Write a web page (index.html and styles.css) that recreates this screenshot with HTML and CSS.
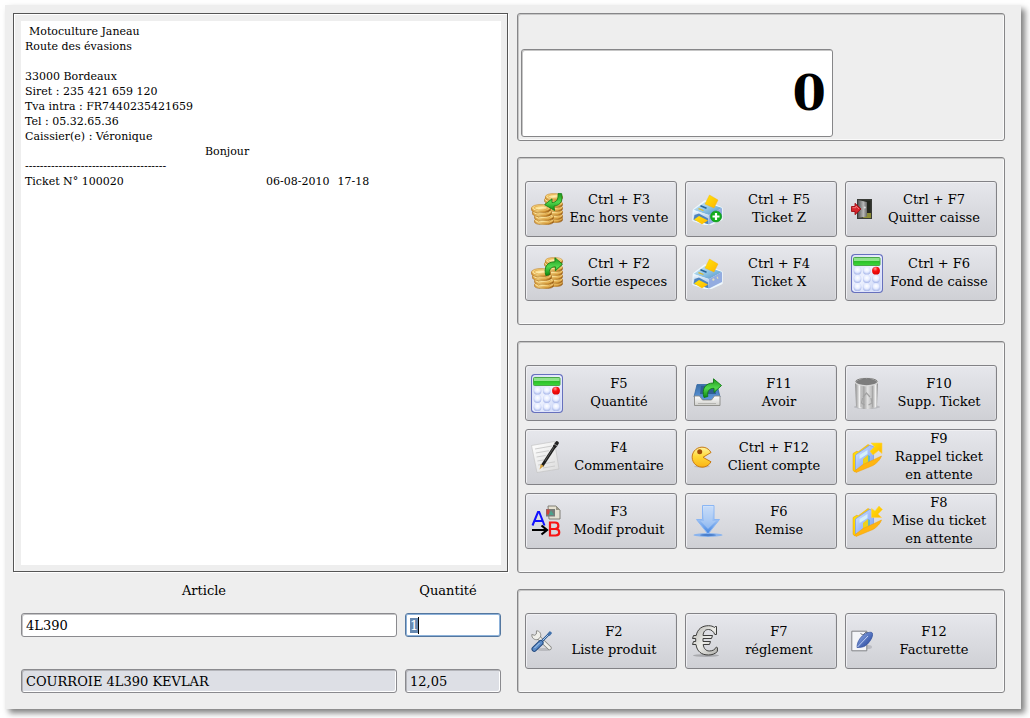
FILE: index.html
```html
<!DOCTYPE html>
<html lang="fr">
<head>
<meta charset="utf-8">
<title>Caisse</title>
<link rel="stylesheet" href="styles.css">
</head>
<body>
<svg class="sprite" aria-hidden="true">
  <defs>
    <linearGradient id="gold" x1="0" x2="1" y1="0" y2="0">
      <stop offset="0" stop-color="#e09a2c"/><stop offset=".35" stop-color="#ffeb98"/><stop offset=".65" stop-color="#dca038"/><stop offset="1" stop-color="#8a5010"/>
    </linearGradient>
    <linearGradient id="goldTop" x1="0" x2="1" y1="0" y2="1">
      <stop offset="0" stop-color="#f0bc50"/><stop offset=".5" stop-color="#ffeeae"/><stop offset="1" stop-color="#dc9a2c"/>
    </linearGradient>
    <linearGradient id="green" x1="0" x2="0" y1="0" y2="1">
      <stop offset="0" stop-color="#1f9a1c"/><stop offset=".5" stop-color="#52d84e"/><stop offset="1" stop-color="#0e8a10"/>
    </linearGradient>
    <linearGradient id="printerTop" x1="0" x2="1" y1="0" y2="1">
      <stop offset="0" stop-color="#d8eefa"/><stop offset=".5" stop-color="#8fc4e4"/><stop offset="1" stop-color="#4f8fc4"/>
    </linearGradient>
    <linearGradient id="printerFront" x1="0" x2="0" y1="0" y2="1">
      <stop offset="0" stop-color="#f6fbff"/><stop offset="1" stop-color="#7caada"/>
    </linearGradient>
    <linearGradient id="yellow" x1="0" x2="1" y1="0" y2="1">
      <stop offset="0" stop-color="#ffe60a"/><stop offset="1" stop-color="#ffb400"/>
    </linearGradient>
    <linearGradient id="door" x1="0" x2="1" y1="0" y2="0">
      <stop offset="0" stop-color="#555"/><stop offset=".6" stop-color="#b8b8b8"/><stop offset="1" stop-color="#666"/>
    </linearGradient>
    <linearGradient id="calcBody" x1="0" x2="1" y1="0" y2="1">
      <stop offset="0" stop-color="#cdd6f4"/><stop offset=".5" stop-color="#eef2ff"/><stop offset="1" stop-color="#c0cdf4"/>
    </linearGradient>
    <linearGradient id="calcScreen" x1="0" x2="0" y1="0" y2="1">
      <stop offset="0" stop-color="#8fe08c"/><stop offset=".45" stop-color="#8ee68a"/><stop offset=".5" stop-color="#2cc02a"/><stop offset="1" stop-color="#3ed83a"/>
    </linearGradient>
    <radialGradient id="ball" cx=".5" cy=".35" r=".7">
      <stop offset="0" stop-color="#ffffff"/><stop offset=".5" stop-color="#e6ecff"/><stop offset="1" stop-color="#9aabe4"/>
    </radialGradient>
    <radialGradient id="redBall" cx=".4" cy=".25" r=".8">
      <stop offset="0" stop-color="#ff9a9a"/><stop offset=".4" stop-color="#fa1010"/><stop offset="1" stop-color="#d80000"/>
    </radialGradient>
    <linearGradient id="paper" x1="0" x2="1" y1="0" y2="1">
      <stop offset="0" stop-color="#ffffff"/><stop offset="1" stop-color="#dcdcdc"/>
    </linearGradient>
    <linearGradient id="blueTray" x1="0" x2="0" y1="0" y2="1">
      <stop offset="0" stop-color="#3a6ea6"/><stop offset="1" stop-color="#5f9ae0"/>
    </linearGradient>
    <linearGradient id="whiteTray" x1="0" x2="0" y1="0" y2="1">
      <stop offset="0" stop-color="#ffffff"/><stop offset="1" stop-color="#cfcfcb"/>
    </linearGradient>
    <linearGradient id="pac" x1="0" x2="0" y1="0" y2="1">
      <stop offset="0" stop-color="#fff3a0"/><stop offset=".45" stop-color="#ffd93a"/><stop offset="1" stop-color="#fbb414"/>
    </linearGradient>
    <linearGradient id="downBlue" x1="0" x2="0" y1="0" y2="1">
      <stop offset="0" stop-color="#d4e4fa"/><stop offset=".5" stop-color="#9cc0f2"/><stop offset="1" stop-color="#3f84e4"/>
    </linearGradient>
    <linearGradient id="steel" x1="0" x2="1" y1="0" y2="0">
      <stop offset="0" stop-color="#858585"/><stop offset=".2" stop-color="#f2f2f2"/><stop offset=".38" stop-color="#a4a4a4"/><stop offset=".55" stop-color="#e2e2e2"/><stop offset=".78" stop-color="#b0b0b0"/><stop offset=".9" stop-color="#f4f4f4"/><stop offset="1" stop-color="#777"/>
    </linearGradient>
    <linearGradient id="folderPaper" x1="0" x2="1" y1="0" y2="1">
      <stop offset="0" stop-color="#dcecff"/><stop offset=".5" stop-color="#a4bffa"/><stop offset="1" stop-color="#7ca0ee"/>
    </linearGradient>
    <linearGradient id="silver" x1="0" x2="1" y1="0" y2="1">
      <stop offset="0" stop-color="#b0b0ac"/><stop offset=".5" stop-color="#ecece8"/><stop offset="1" stop-color="#b0b0ac"/>
    </linearGradient>
    <linearGradient id="pen" x1="0" x2="1" y1="0" y2="1">
      <stop offset="0" stop-color="#a8c0f0"/><stop offset=".5" stop-color="#5574c0"/><stop offset="1" stop-color="#1f3c90"/>
    </linearGradient>
  </defs>

  <symbol id="coin" viewBox="0 0 18 8" preserveAspectRatio="none">
    <path d="M.5 3.500v1.600C.5 6.700 4.300 7.800 9 7.800s8.500-1.100 8.500-2.700V3.500z" fill="url(#gold)" stroke="#9a5e16" stroke-width=".5"/>
    <ellipse cx="9" cy="3.500" rx="8.500" ry="3.100" fill="url(#goldTop)" stroke="#c0822a" stroke-width=".5"/>
    <ellipse cx="9" cy="3.500" rx="6" ry="1.900" fill="none" stroke="#d89c38" stroke-width=".6"/>
  </symbol>

  <symbol id="coins" viewBox="0 0 32 32">
    <use href="#coin" x="14" y="22" width="18" height="8"/>
    <use href="#coin" x="14" y="19" width="18" height="8"/>
    <use href="#coin" x="14" y="15" width="18" height="8"/>
    <use href="#coin" x="14" y="11" width="18" height="8"/>
    <use href="#coin" x="14" y="7" width="18" height="8"/>
    <use href="#coin" x="13" y="3" width="18" height="8"/>
    <use href="#coin" x="14" y="0" width="18" height="8"/>
    <use href="#coin" x="3" y="24" width="20" height="8"/>
    <use href="#coin" x="3" y="20" width="20" height="8"/>
    <use href="#coin" x="1" y="15" width="20" height="9"/>
    <use href="#coin" x="0" y="11" width="20" height="9"/>
  </symbol>

  <symbol id="printer" viewBox="0 0 32 32">
    <path d="M3 17 14 8.500l16.500 7V26l-13 6L2.500 27z" fill="#eaf4fa" stroke="#eef8fd" stroke-width="2.500" stroke-linejoin="round"/>
    <path d="M2.500 17 14 9l17 6-13 7z" fill="url(#printerTop)"/>
    <path d="M2.500 17 18 22v9.500L2.500 26z" fill="url(#printerFront)"/>
    <path d="M18 22 31 15v10l-13 6.500z" fill="#93ace0"/>
    <path d="M3.500 22 8 20.500l9 5V31L2.500 27z" fill="#4f83bd"/>
    <path d="m3 26.500 5-3.500 9 4.500-6 3.800z" fill="url(#yellow)"/>
    <path d="m9.500 12.800 6 2.400" stroke="#27649a" stroke-width="1.600"/>
    <path d="m7.500 15.600 5 1.900" stroke="#e0ba28" stroke-width="1.200"/>
    <path d="m18.500 2 8.500 5-4 8-9-4z" fill="url(#yellow)" stroke="#f7b100" stroke-width=".4"/>
    <path d="m21.500 23 1.800-.8M26 21l1-.5" stroke="#e6e0b4" stroke-width="2"/>
  </symbol>

  <symbol id="calculator" viewBox="0 0 32 39">
    <rect x=".6" y=".6" width="30.800" height="37.800" rx="3.200" fill="url(#calcBody)" stroke="#6670bd" stroke-width="1.200"/>
    <rect x="1.700" y="1.700" width="28.600" height="35.600" rx="2.400" fill="none" stroke="#e9edff"/>
    <rect x="2.500" y="3.500" width="26.500" height="8" rx="1" fill="url(#calcScreen)" stroke="#4aa848"/>
    <g fill="url(#ball)">
      <circle cx="6.500" cy="16.700" r="3.900"/><circle cx="15.800" cy="16.700" r="3.900"/>
      <circle cx="6.500" cy="25" r="3.900"/><circle cx="15.800" cy="25" r="3.900"/><circle cx="25" cy="25" r="3.900"/>
      <circle cx="6.500" cy="33.200" r="3.900"/><circle cx="15.800" cy="33.200" r="3.900"/><circle cx="25" cy="33.200" r="3.900"/>
    </g>
    <circle cx="25" cy="16.700" r="3.900" fill="url(#redBall)"/>
  </symbol>

  <symbol id="turn-right" viewBox="0 0 20 20">
    <path d="M2 19.500C-.5 11 3 5 11.500 5V.8l8 6.700-7.500 7v-4.200C7 10.300 5 13.500 5.800 18.500z" fill="url(#green)" stroke="#117a14" stroke-width=".9" stroke-linejoin="round"/>
  </symbol>

  <symbol id="folder" viewBox="0 0 32 32">
    <path d="m2 12.500 4-2.500 1 1 10-7.500 2 1V19L4 31l-2-1.500z" fill="url(#yellow)" stroke="#e8a000" stroke-width=".5"/>
    <path d="m4.500 14 14-9.500 4 1V20L7 29H4.500z" fill="url(#folderPaper)" stroke="#7c9eee" stroke-width=".8"/>
    <path d="m8.500 14 8-5v4l-8 5z" fill="#d4f0fb"/>
    <path d="m12 18 5-4v7l-5 4z" fill="#ecd21c"/>
    <path d="m17 14 2 1v6l-2 1z" fill="#66b8c8"/>
    <path d="M3.500 30 12 23.500l10-4.500 8.500-4c-1 3.500-5 7.500-8.500 9.500L5 31.500z" fill="#ffb512" stroke="#f2a000" stroke-width=".5"/>
  </symbol>
</svg>

<main class="window">
  <section class="side">
    <div class="ticket-frame">
      <div class="ticket">
        <p class="line indent">Motoculture Janeau</p>
        <p class="line">Route des évasions</p>
        <p class="line"></p>
        <p class="line">33000 Bordeaux</p>
        <p class="line">Siret : 235 421 659 120</p>
        <p class="line">Tva intra : FR7440235421659</p>
        <p class="line">Tel : 05.32.65.36</p>
        <p class="line">Caissier(e) : Véronique</p>
        <p class="line greeting">Bonjour</p>
        <p class="line">--------------------------------------</p>
        <p class="line entry"><span class="entry-number">Ticket N° 100020</span><span>06-08-2010</span><span>17-18</span></p>
      </div>
    </div>
    <form class="entry-form">
      <label class="caption" for="article">Article</label>
      <label class="caption" for="quantity">Quantité</label>
      <input class="field" id="article" type="text" value="4L390">
      <input class="field field-active" id="quantity" type="text" value="1">
      <input class="field field-readonly" type="text" value="COURROIE 4L390 KEVLAR" aria-label="Désignation" readonly>
      <input class="field field-readonly" type="text" value="12,05" aria-label="Prix" readonly>
    </form>
  </section>

  <section class="controls">
    <div class="panel panel-display">
      <input class="display" type="text" value="0" aria-label="Total" readonly>
    </div>

    <div class="panel">
      <button class="key" type="button">
        <svg class="icon" viewBox="0 0 32 32"><use href="#coins"/><path d="M27 .6h3.600C32 7 30.500 12 23 13.200l.6 4.300-10-5.800L21 5.800v3.800c4.500-.3 6.500-3 6-9z" fill="url(#green)" stroke="#117a14" stroke-width=".8" stroke-linejoin="round"/></svg>
        <span class="key-text">Ctrl + F3<br>Enc hors vente</span>
      </button>
      <button class="key" type="button">
        <svg class="icon" viewBox="0 0 32 32"><use href="#printer"/><circle cx="25" cy="23.500" r="5.600" fill="#12ae1c" stroke="#0a8a14" stroke-width=".5"/><path d="M25 20v7M21.500 23.500h7" stroke="#fff" stroke-width="2.200"/></svg>
        <span class="key-text">Ctrl + F5<br>Ticket Z</span>
      </button>
      <button class="key" type="button">
        <svg class="icon icon-small" viewBox="0 0 22 22"><path d="M6 1h15v20H6z" fill="#3a3c38"/><path d="M8 2.500h11.500v17H8z" fill="#24261f"/><path d="M14 15h6v5h-8z" fill="#8c8c36"/><path d="M7 2l9 2v14.500L7 20z" fill="url(#door)"/><circle cx="13.800" cy="9.500" r="1" fill="#ddd"/><path d="M.5 8.500H4V5.300l6 5.700-6 5.700v-3.200H.5z" fill="#d8252c" stroke="#9c0c12" stroke-width=".9"/><path d="M1.500 9.700H5V8l3 3" fill="none" stroke="#f58a8a" stroke-width=".8"/></svg>
        <span class="key-text">Ctrl + F7<br>Quitter caisse</span>
      </button>
      <button class="key" type="button">
        <svg class="icon" viewBox="0 0 32 32"><use href="#coins"/><use href="#turn-right" x="13" y="0" width="19" height="19"/></svg>
        <span class="key-text">Ctrl + F2<br>Sortie especes</span>
      </button>
      <button class="key" type="button">
        <svg class="icon" viewBox="0 0 32 32"><use href="#printer"/></svg>
        <span class="key-text">Ctrl + F4<br>Ticket X</span>
      </button>
      <button class="key" type="button">
        <svg class="icon icon-tall" viewBox="0 0 32 39"><use href="#calculator"/></svg>
        <span class="key-text">Ctrl + F6<br>Fond de caisse</span>
      </button>
    </div>

    <div class="panel">
      <button class="key" type="button">
        <svg class="icon icon-tall" viewBox="0 0 32 39"><use href="#calculator"/></svg>
        <span class="key-text">F5<br>Quantité</span>
      </button>
      <button class="key" type="button">
        <svg class="icon" viewBox="0 0 32 32"><path d="M6 7.500h20L29 20l-6 3H9l-6-3z" fill="url(#blueTray)" stroke="#3468a4" stroke-width=".8"/><path d="M10 9h14l1 8H9z" fill="#2f5e94"/><path d="M3.500 19h5l3 4h9l3-4h5.500v9.500h-25.500z" fill="url(#whiteTray)" stroke="#8a8a86" stroke-width=".9"/><path d="M7 26.500h18" stroke="#b4b4b0"/><use href="#turn-right" x="11" y="1" width="20" height="20"/></svg>
        <span class="key-text">F11<br>Avoir</span>
      </button>
      <button class="key" type="button">
        <svg class="icon" viewBox="0 0 32 32"><ellipse cx="16" cy="30" rx="13" ry="2" fill="#b9babf"/><path d="M4 5h23l-1 24c-1 4-20 4-21 0z" fill="url(#steel)"/><path d="M10 9v21M21.500 9v21" stroke="#a0a0a0" stroke-width=".7"/><path d="m12 20 3.500-4 3.500 4m1 1 1 5-3.500 2m-4 0-3-2 1-5" fill="none" stroke="#a2a2a2" stroke-width="1.200"/><ellipse cx="15.500" cy="5" rx="11.200" ry="3.800" fill="#7c7c7c" stroke="#d8d8d8" stroke-width="1.200"/><path d="M4.500 4.500C6 .4 25 .4 26.500 4.500" fill="none" stroke="#666" stroke-width=".8"/></svg>
        <span class="key-text">F10<br>Supp. Ticket</span>
      </button>
      <button class="key" type="button">
        <svg class="icon" viewBox="0 0 32 32"><path d="m.5 4.500 23-4L28 28 6 31.500z" fill="url(#paper)" stroke="#c4c4c4" stroke-width=".7"/><path d="m4 8 17-3M4.800 12 18 9.700M5.600 16l9-1.500M6.400 20l7-1.200M7.200 24l4-.7M14 22.500l10-1.700M12 27l12-2" stroke="#cdcdcd" stroke-width="1"/><path d="m11 25 13-20" stroke="#1c1c1c" stroke-width="3"/><path d="m14 20 9-14" stroke="#727272" stroke-width=".7"/><path d="m24 5 2-3" stroke="#222" stroke-width="3.600" stroke-linecap="round"/><path d="m23 3 3.500 2" stroke="#aaa" stroke-width=".8"/><path d="m9.800 23 3 2-4.300 3.500z" fill="#d7a544"/></svg>
        <span class="key-text">F4<br>Commentaire</span>
      </button>
      <button class="key" type="button">
        <svg class="icon icon-small" viewBox="0 0 22 22"><ellipse cx="11" cy="20.500" rx="8" ry="1.200" fill="#bcbcc0"/><path d="M20 6.500A10 10 0 1 0 20 15.800L12 11.300z" fill="url(#pac)" stroke="#c87a14" stroke-width="1" stroke-linejoin="round"/><circle cx="8.700" cy="5.700" r="2.500" fill="#a24c08"/></svg>
        <span class="key-text">Ctrl + F12<br>Client compte</span>
      </button>
      <button class="key" type="button">
        <svg class="icon" viewBox="0 0 32 32"><use href="#folder"/><path d="M20 2h11v10.500l-3.500-3L22 14l-3-3.800 4.500-4.500z" fill="url(#yellow)" stroke="#ffd24a" stroke-width=".6"/></svg>
        <span class="key-text">F9<br>Rappel ticket<br>en attente</span>
      </button>
      <button class="key" type="button">
        <svg class="icon" viewBox="0 0 32 32"><path d="M17 1h8l4 4v9H18z" fill="#e6e2d2" stroke="#77756c" stroke-width=".9"/><path d="M25 1v4h4z" fill="#9b9888"/><path d="M15 4h9v7.500h-9z" fill="#777c78"/><path d="M15.500 4.500h3v5h-3z" fill="#d0433c"/><path d="m18 9 2-3.500L23 10h-5z" fill="#4ba38c"/><path d="M1.500 20.500 7 7h1.200l5.300 13.500M3.500 16h8" fill="none" stroke="#1010ff" stroke-width="2"/><path d="M19 17.500v13h5.500c5 0 5-6.500 0-6.500H19h5c4.500 0 4.500-6.500 0-6.500z" fill="none" stroke="#f81414" stroke-width="2.200"/><path d="M1 25h15m-5.500-4.500L16 25l-5.500 4.500" fill="none" stroke="#000" stroke-width="2.200"/></svg>
        <span class="key-text">F3<br>Modif produit</span>
      </button>
      <button class="key" type="button">
        <svg class="icon" viewBox="0 0 32 32"><ellipse cx="17" cy="30" rx="14.500" ry="1.900" fill="#8ab4ee"/><ellipse cx="17" cy="30" rx="8" ry="1.200" fill="#4c80cc"/><path d="M11.500.5h11.500V14.500h5.500L17 29 5.500 14.500h6z" fill="url(#downBlue)" stroke="#8ab6f4"/><path d="M13 2h8.500v14H25l-8 8-7.500-8H13z" fill="#bcd5f7" opacity=".5"/></svg>
        <span class="key-text">F6<br>Remise</span>
      </button>
      <button class="key" type="button">
        <svg class="icon" viewBox="0 0 32 32"><use href="#folder"/><path d="M20.500 3.500 24 6l4-5 3.500 3.500L27 9l3.500 3.500h-10z" fill="url(#yellow)" stroke="#ffd24a" stroke-width=".6"/></svg>
        <span class="key-text">F8<br>Mise du ticket<br>en attente</span>
      </button>
    </div>

    <div class="panel">
      <button class="key" type="button">
        <svg class="icon icon-small" viewBox="0 0 22 22"><ellipse cx="13" cy="19.500" rx="7" ry="1.600" fill="#b9babf"/><path d="m7 7 11.500 11" stroke="#80807c" stroke-width="4.400" stroke-linecap="round"/><path d="m7 7 11.500 11" stroke="#f0f0ec" stroke-width="2.800" stroke-linecap="round"/><path d="M5.500.8 5.300 4 3.800 5.300.8 4.500C.5 8 3.500 10.500 7 9.400L9.500 7C10.500 3.500 8.500.8 5.500.8z" fill="#efefea" stroke="#80807c" stroke-width=".9"/><path d="m10 12 9-9" stroke="#2a5890" stroke-width="2.400"/><path d="m10 12 9-9" stroke="#a8c8ee" stroke-width="1"/><path d="m17.500 5 2.500-3" stroke="#4272ac" stroke-width="3"/><path d="m3.300 19 6.500-6.300" stroke="#234a80" stroke-width="5.600" stroke-linecap="round"/><path d="m3.300 19 6.500-6.300" stroke="#5b8cc8" stroke-width="3.600" stroke-linecap="round"/><path d="m3.500 18 5-5" stroke="#b4d0f0" stroke-width="1"/></svg>
        <span class="key-text">F2<br>Liste produit</span>
      </button>
      <button class="key" type="button">
        <svg class="icon" viewBox="0 0 32 32"><ellipse cx="15" cy="30.500" rx="13" ry="1.500" fill="#a9aaae"/><path d="M25.500 1.500v8h-1.700C22.500 6.500 20.500 4.500 17.500 4.500c-3.500 0-5 2-5.500 6H21.500l-1 3H12v3h7.500l-1 3h-6.300c.7 4.500 3 6.500 6.200 6.500 3.500 0 5.500-1.500 7-4l1 .7v3.700C24 29 21 30 17.500 30 10.500 30 6 26.500 5 19.500H1.500l1-3h2.200v-3H1.500l1-3H5.200C6.500 4 11 .7 17.500.7c2.500 0 4.500.6 6 1.800l.7-1z" fill="url(#silver)" stroke="#3e3e3c" stroke-width="1"/></svg>
        <span class="key-text">F7<br>réglement</span>
      </button>
      <button class="key" type="button">
        <svg class="icon icon-small" viewBox="0 0 22 22"><ellipse cx="17" cy="17" rx="4" ry="2" fill="#bbbcc2"/><path d="M.8 1.200h15V20.800H.8z" fill="#f4f5f8" stroke="#808286" stroke-width="1"/><path d="M9.500 3.500 12 5l3-3 4 2" fill="none" stroke="#777b84"/><path d="M6 17.500c0-5 2.500-9.500 7-13C17 2 21 1.500 21.500 3.500c.7 3-2.500 9-7.500 12.500-2 1.200-5 1.500-8 1.500z" fill="url(#pen)" stroke="#304f9c" stroke-width=".7"/><path d="M6.500 17 17 6" stroke="#dde7ff" stroke-width=".8"/></svg>
        <span class="key-text">F12<br>Facturette</span>
      </button>
    </div>
  </section>
</main>
<script src="script.js"></script>
</body>
</html>
```
FILE: styles.css
```css
* {
  box-sizing: border-box;
}

body {
  margin: 0;
  padding: 5px 9px 9px 5px;
  background: #fff;
  color: #000;
  font: 13px/18px "DejaVu Serif", serif;
}

.sprite {
  position: absolute;
  width: 0;
  height: 0;
}

.window {
  display: grid;
  grid-template-columns: 495fr 488fr;
  gap: 9px;
  min-height: calc(100vh - 14px);
  padding: 8px 16px 16px 8px;
  background: #eee;
  box-shadow: 4px 4px 6px rgba(0, 0, 0, .5);
}

.side {
  display: flex;
  flex-direction: column;
  gap: 9px;
}

.ticket-frame {
  display: flex;
  flex: 1;
  padding: 7px 6px 6px 7px;
  border: 1px solid #555;
  box-shadow: inset 1px 1px #fff, 1px 1px #fff;
}

.ticket {
  flex: 1;
  padding: 3px 4px;
  background: #fff;
  font-size: 11px;
  line-height: 15px;
}

.line {
  min-height: 15px;
  margin: 0;
}

.indent {
  padding-left: 4px;
}

.greeting {
  padding-left: 180px;
}

.entry {
  display: flex;
  gap: 8px;
}

.entry-number {
  width: 233px;
}

.entry-form {
  display: grid;
  grid-template-columns: 376fr 96fr;
  column-gap: 8px;
  padding: 0 7px 0 8px;
}

.caption {
  padding: 1px 10px 13px 0;
  text-align: center;
}

.field {
  width: 100%;
  min-width: 0;
  height: 24px;
  margin: 0 0 32px;
  padding: 0 4px;
  border: 1px solid #8a8a8e;
  border-radius: 3px;
  outline: 0;
  background: #fff;
  box-shadow: inset 1px 1px #c4c4c6;
  color: #000;
  font: inherit;
}

.field::selection {
  background: #6789b1;
  color: #fff;
}

.field-active {
  border-color: #54779f;
  background: linear-gradient(#000, #000) 12px 3px / 1px 17px no-repeat #fff;
  box-shadow: inset 0 0 0 1px #8db2da;
}

.field-readonly {
  margin-bottom: 0;
  background: #dddfe5;
  box-shadow: inset 1px 1px #b4b5ba, inset -1px -1px #fff;
}

.controls {
  display: flex;
  flex-direction: column;
  gap: 16px;
}

.panel {
  display: grid;
  grid-template-columns: repeat(3, 1fr);
  gap: 8px;
  padding: 23px 7px;
  border: 1px solid #868688;
  border-radius: 3px;
  box-shadow: inset 1px 1px #c6c6c6, inset -1px -1px #fafafa;
}

.panel-display {
  display: block;
  padding: 35px 3px 3px;
}

.display {
  display: block;
  width: 65%;
  height: 88px;
  margin: 0;
  padding: 0 6px;
  border: 1px solid #868688;
  border-radius: 3px;
  background: #fff;
  box-shadow: inset 1px 1px #c6c6c6;
  color: #000;
  font: bold 48px "DejaVu Serif", serif;
  text-align: right;
}

.key {
  display: flex;
  align-items: center;
  gap: 4px;
  min-width: 0;
  height: 56px;
  margin: 0;
  padding: 0 5px;
  border: 1px solid #828286;
  border-radius: 3px;
  background: linear-gradient(#e6e7ec, #cfd0d5);
  box-shadow: inset 1px 1px #f0f0f3, inset -1px 0 #dcdde1;
  color: #000;
  font: inherit;
  line-height: 18px;
}

.key-text {
  flex: 1;
  text-align: center;
  white-space: nowrap;
}

.icon {
  flex: none;
  width: 32px;
  height: 32px;
}

.icon-tall {
  height: 39px;
}

.icon-small {
  width: 22px;
  height: 22px;
}
```
FILE: script.js
```js
const quantity = document.getElementById("quantity");
quantity.focus();
quantity.select();
```
